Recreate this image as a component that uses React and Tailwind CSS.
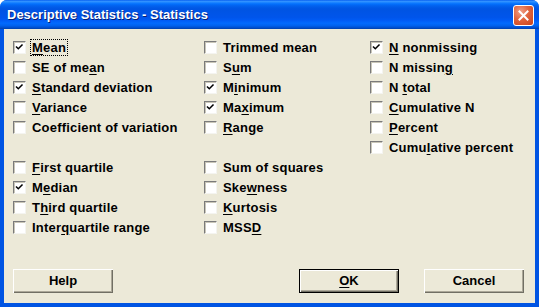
import React from "react";

const font = { fontFamily: '"Liberation Sans", Arial, sans-serif' };

function Label({ text, u }) {
  if (u === undefined || u < 0) return <span>{text}</span>;
  return (
    <span>
      {text.slice(0, u)}
      <span className="underline underline-offset-[2px] decoration-1">{text[u]}</span>
      {text.slice(u + 1)}
    </span>
  );
}

function Check({ text, u, checked, focus }) {
  return (
    <div className="h-[20px] flex items-center">
      <div className="w-[13px] h-[13px] shrink-0 border border-t-[#7a7a7a] border-l-[#7a7a7a] border-b-[#f4f4f0] border-r-[#f4f4f0] bg-white shadow-[inset_1px_1px_0_#c9c6b8] flex items-center justify-center">
        {checked && (
          <svg width="9" height="9" viewBox="0 0 9 9">
            <path d="M1.5 4 L3.3 5.8 L7 2" fill="none" stroke="#000" strokeWidth="1.5" strokeLinecap="square" />
          </svg>
        )}
      </div>
      <div
        className={
          "ml-[5px] px-[1px] leading-[15px] text-[13px] font-bold text-black tracking-[0.2px] whitespace-nowrap " +
          (focus ? "outline outline-1 outline-dotted outline-black" : "")
        }
      >
        <Label text={text} u={u} />
      </div>
    </div>
  );
}

function Btn({ children, def }) {
  return (
    <div
      className={
        "w-[100px] h-[24px] flex items-center justify-center text-[13px] font-bold text-black bg-[#ece9d8] " +
        (def
          ? "border border-black shadow-[inset_1px_1px_0_#fff,inset_-1px_-1px_0_#716f64,inset_-2px_-2px_0_#aca899]"
          : "shadow-[inset_1px_1px_0_#fff,inset_-1px_-1px_0_#716f64,inset_-2px_-2px_0_#aca899]")
      }
    >
      {children}
    </div>
  );
}

export default function App() {
  return (
    <div className="w-[539px] h-[307px] flex flex-col overflow-hidden rounded-t-[7px] bg-[#0054e3]" style={font}>
      <div className="h-[29px] shrink-0 flex items-center pl-[7px] pr-[5px] bg-[linear-gradient(to_bottom,#0058ee_0%,#3593ff_4%,#288eff_7%,#127dff_10%,#036ffc_14%,#0262ee_20%,#0057e5_28%,#0054e3_34%,#0055eb_60%,#005bf5_70%,#026afe_80%,#0062ef_88%,#0052d6_94%,#0040ab_100%)]">
        <div className="text-white font-bold text-[13px] [text-shadow:1px_1px_0_#0a1e72] flex-1 pt-[1px]">
          Descriptive Statistics - Statistics
        </div>
        <div className="w-[21px] h-[21px] mt-[2px] rounded-[3px] border border-white bg-[radial-gradient(circle_at_35%_30%,#f0a088_0%,#e0643e_45%,#c8421a_100%)] flex items-center justify-center">
          <svg width="11" height="11" viewBox="0 0 11 11">
            <path d="M1.5 1.5 L9.5 9.5 M9.5 1.5 L1.5 9.5" stroke="#fff" strokeWidth="2" strokeLinecap="square" />
          </svg>
        </div>
      </div>
      <div className="flex-1 flex flex-col mx-[4px] mb-[4px] bg-[#ece9d8] pt-[8px] pl-[9px] pr-[11px] pb-[10px]">
        <div className="flex">
          <div className="w-[191px] flex flex-col">
            <Check text="Mean" u={0} checked focus />
            <Check text="SE of mean" u={8} />
            <Check text="Standard deviation" u={0} checked />
            <Check text="Variance" u={0} />
            <Check text="Coefficient of variation" />
            <div className="h-[20px]" />
            <Check text="First quartile" u={0} />
            <Check text="Median" u={1} checked />
            <Check text="Third quartile" u={1} />
            <Check text="Interquartile range" u={5} />
          </div>
          <div className="w-[166px] flex flex-col">
            <Check text="Trimmed mean" />
            <Check text="Sum" u={1} />
            <Check text="Minimum" u={1} checked />
            <Check text="Maximum" u={2} checked />
            <Check text="Range" u={0} />
            <div className="h-[20px]" />
            <Check text="Sum of squares" />
            <Check text="Skewness" u={3} />
            <Check text="Kurtosis" u={0} />
            <Check text="MSSD" u={3} />
          </div>
          <div className="flex flex-col">
            <Check text="N nonmissing" u={0} checked />
            <Check text="N missing" u={8} />
            <Check text="N total" u={2} />
            <Check text="Cumulative N" u={0} />
            <Check text="Percent" u={0} />
            <Check text="Cumulative percent" u={4} />
          </div>
        </div>
        <div className="mt-auto flex items-center">
          <Btn>Help</Btn>
          <div className="flex-1" />
          <Btn def>
            <Label text="OK" u={0} />
          </Btn>
          <div className="w-[25px]" />
          <Btn>Cancel</Btn>
        </div>
      </div>
    </div>
  );
}
